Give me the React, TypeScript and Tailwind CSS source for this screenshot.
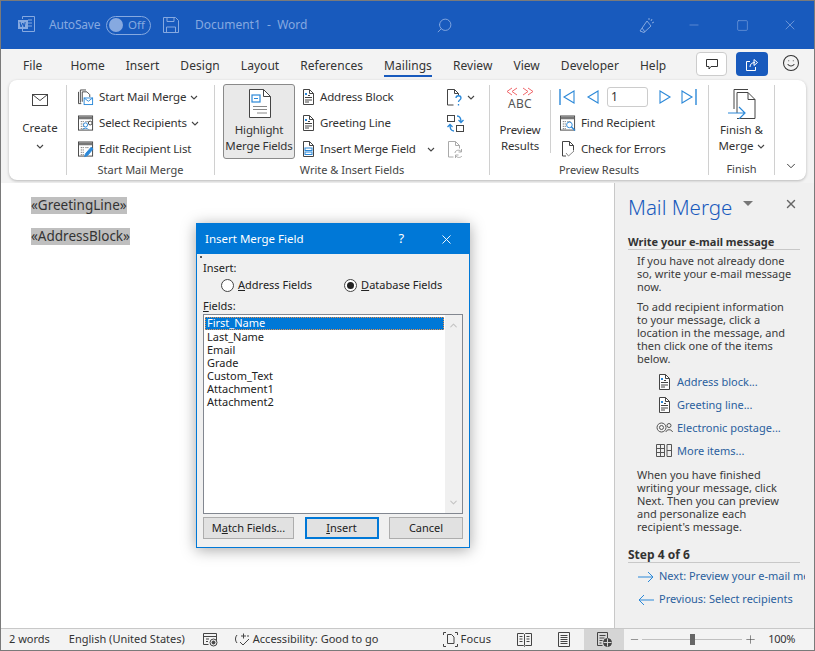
import React from "react";
import { ChevronDown, Search, Minus, Plus, Square, X, Smile } from "lucide-react";

const font = "font-['Noto_Sans','Open_Sans',sans-serif]";

const Chev = ({ className = "" }: { className?: string }) => (
  <svg width="8" height="5" viewBox="0 0 8 5" className={className} fill="none" stroke="#444" strokeWidth="1.1">
    <path d="M1 1l3 3 3-3" />
  </svg>
);

const DocSmall = ({ lines = "#444", blue = true }: { lines?: string; blue?: boolean }) => (
  <svg width="13" height="16" viewBox="0 0 13 16" fill="none" stroke="#444">
    <path d="M1.5.5h6l4 4v11h-10z" fill="#fff" />
    <path d="M7.5.5v4h4" />
    {blue && <rect x="3" y="4" width="2" height="2" fill="#2b88d8" stroke="none" />}
    <path d="M3 8.5h7M6 6.5h2M3 11h7M3 13h4" stroke={lines} />
  </svg>
);

const StartIcon = () => (
  <svg width="17" height="17" viewBox="0 0 17 17" fill="none" stroke="#444">
    <path d="M2.5 14V.5h6M.5 2.5V15h3" />
    <path d="M4.5 13V2.5h5l3 3V8" fill="#fff" />
    <rect x="6.5" y="9" width="9" height="7" fill="#fff" stroke="#2b88d8" />
    <path d="M6.5 9l4.5 3.5L15.5 9" stroke="#2b88d8" />
  </svg>
);

const TableIcon = ({ children }: { children: React.ReactNode }) => (
  <svg width="17" height="17" viewBox="0 0 17 17" fill="none" stroke="#444">
    <rect x=".5" y=".5" width="15" height="15" fill="#fff" />
    <rect x="1" y="1" width="14" height="3" fill="#777" stroke="none" />
    <path d="M3 6.5h3M3 9h3M3 11.5h3M3 14h3M8 6.5h3" strokeDasharray="1 1" />
    {children}
  </svg>
);

const ToolItem = ({ icon, label, chev, iconBox = "w-[16px]" }: { icon: React.ReactNode; label: string; chev?: boolean; iconBox?: string }) => (
  <div className="flex h-[26px] items-center text-[11.5px] tracking-[-.15px] text-[#333]">
    <span className={`flex shrink-0 justify-center ${iconBox}`}>{icon}</span>
    <span className="ml-[5px] whitespace-nowrap">{label}</span>
    {chev && <Chev className="ml-[4px]" />}
  </div>
);

const GroupLabel = ({ children }: { children: React.ReactNode }) => (
  <div className="flex h-[16px] items-center justify-center whitespace-nowrap text-[11px] text-[#444]">{children}</div>
);

const Sep = () => <div className="my-[5px] w-px shrink-0 bg-[#d0d0d0]" />;

const Tri = ({ dir, bar }: { dir: "l" | "r"; bar?: boolean }) => (
  <svg width="16" height="18" viewBox="0 0 16 18" fill="none" stroke="#2b88d8" strokeWidth="1.1">
    {dir === "l" ? (
      <>
        {bar && <path d="M1 1v16" strokeWidth="1.4" />}
        <path d="M15 3v12L5 9z" />
      </>
    ) : (
      <>
        {bar && <path d="M15 1v16" strokeWidth="1.4" />}
        <path d="M1 3v12l10-6z" />
      </>
    )}
  </svg>
);

const tabs = ["File", "Home", "Insert", "Design", "Layout", "References", "Mailings", "Review", "View", "Developer", "Help"];

const TitleBar = () => (
  <div className="flex h-[48px] shrink-0 items-center bg-[#185abd] pl-[16px] text-[12px] text-[#86a9e0]">
    <svg width="18" height="17" viewBox="0 0 18 17" fill="none" stroke="#86a9e0" className="mt-[-1px]">
      <path d="M5.5 3V.5h12v15h-12V13" />
      <path d="M11 4h4M11 7h4M11 10h4" />
      <rect x="1" y="4" width="10" height="9" fill="#86a9e0" stroke="none" />
      <path d="M3 6l1 5 1.8-4 1.4 4 1-5" stroke="#185abd" />
    </svg>
    <span className="ml-[14px] w-[50px] tracking-[-.2px]">AutoSave</span>
    <span className="ml-[7px] flex h-[19px] w-[45px] items-center rounded-full border border-[#86a9e0] pl-[2px]">
      <span className="h-[14px] w-[14px] rounded-full bg-[#86a9e0]" />
      <span className="ml-[5px] text-[11.5px]">Off</span>
    </span>
    <svg width="16" height="16" viewBox="0 0 16 16" fill="none" stroke="#86a9e0" className="ml-[12px]">
      <path d="M.5.500h12l3 3v12H.5z" />
      <path d="M4 .5v4h7v-4M3.500 15.500V10h9v5.500" />
    </svg>
    <span className="ml-[16px] w-[107px] whitespace-nowrap">Document1&nbsp; -&nbsp; Word</span>
    <Search size={17} className="ml-[134px] scale-x-[-1]" strokeWidth={1.3} />
    <svg width="17" height="17" viewBox="0 0 17 17" fill="none" stroke="#86a9e0" className="ml-[186px]">
      <path d="M1 14L8 4l4 5-7 6.500zM3 11l3 4M13 2l-1 2M15 5l-2 1M10 1l0 2" />
    </svg>
    <Minus size={14} className="ml-[31px]" strokeWidth={1} />
    <Square size={13} className="ml-[35px]" strokeWidth={1.1} />
    <X size={16} className="ml-[33px]" strokeWidth={1.1} />
  </div>
);

const TabBar = () => (
  <div className="flex h-[31px] shrink-0 bg-[#f3f3f3] pl-[22px] text-[12px] tracking-[.05px] text-[#333]">
    <div className="flex gap-[21px]">
      {tabs.map((t, i) => (
        <div key={t} className={`flex h-[31px] flex-col items-center pt-[8px] ${i === 0 ? "mr-[7px]" : ""}`}>
          <span>{t}</span>
          {t === "Mailings" && <span className="h-[2px] w-full bg-[#185abd]" />}
        </div>
      ))}
    </div>
    <div className="ml-auto mr-[14px] flex items-start pt-[3px]">
      <span className="flex h-[24px] w-[31px] items-center justify-center rounded-[4px] border border-[#ccc] bg-white">
        <svg width="12" height="12" viewBox="0 0 12 12" fill="none" stroke="#333">
          <path d="M.5 1.500h11v7H5L3 11V8.500H.5z" />
        </svg>
      </span>
      <span className="ml-[9px] flex h-[24px] w-[32px] items-center justify-center rounded-[4px] bg-[#185abd]">
        <svg width="13" height="13" viewBox="0 0 13 13" fill="none" stroke="#fff">
          <path d="M4 3.500H.5v9h9V9M4 9c0-3 2-4.500 5-4.500M8 1.500l3.500 3-3.500 3z" />
        </svg>
      </span>
      <Smile size={18} className="ml-[14px] mt-[2px] text-[#333]" strokeWidth={1.4} />
    </div>
  </div>
);

const Ribbon = () => (
  <div className="mx-[8px] flex h-[100px] shrink-0 rounded-[8px] bg-white shadow-[0_1px_3px_rgba(0,0,0,0.25)]">
    {/* Create */}
    <div className="flex w-[57px] shrink-0 flex-col items-center pl-[5px] pt-[14px] text-[11.5px] text-[#333]">
      <svg width="16" height="12" viewBox="0 0 16 12" fill="none" stroke="#444">
        <rect x=".5" y=".5" width="15" height="11" />
        <path d="M.5.500L8 6.500l7.500-6" />
      </svg>
      <span className="mt-[13px]">Create</span>
      <Chev className="mt-[8px]" />
    </div>
    <Sep />
    {/* Start Mail Merge */}
    <div className="flex w-[147px] shrink-0 flex-col pt-[4px]">
      <div className="pl-[11px]">
        <ToolItem icon={<StartIcon />} label="Start Mail Merge" chev />
        <ToolItem
          icon={
            <TableIcon>
              <circle cx="8" cy="10" r="2.200" stroke="#2b88d8" fill="#fff" />
              <path d="M5 15c.5-2 5.500-2 6 0" stroke="#2b88d8" />
              <circle cx="13" cy="8" r="2" fill="#fff" />
            </TableIcon>
          }
          label="Select Recipients"
          chev
        />
        <ToolItem
          icon={
            <TableIcon>
              <path d="M7 16l1-3 6-7 2 2-6 7z" fill="#2b88d8" stroke="#2b88d8" />
            </TableIcon>
          }
          label="Edit Recipient List"
        />
      </div>
      <GroupLabel>Start Mail Merge</GroupLabel>
    </div>
    <Sep />
    {/* Write & Insert Fields */}
    <div className="flex w-[274px] shrink-0 flex-col pt-[4px]">
      <div className="flex h-[78px]">
        <div className="ml-[8px] flex h-[75px] w-[72px] shrink-0 flex-col items-center rounded-[3px] border border-[#8a8a8a] bg-[#e9e9e9] pt-[4px] text-[11.5px] leading-[16px] tracking-[-.15px] text-[#333]">
          <svg width="23" height="29" viewBox="0 0 23 29" fill="none" stroke="#444">
            <path d="M1.500.500h14l7 7v21h-21z" fill="#fff" />
            <path d="M15.500.500v7h7" />
            <rect x="4" y="6" width="8" height="7" stroke="#2b88d8" fill="#fff" strokeWidth="1.200" />
            <path d="M6 9.500h4" stroke="#2b88d8" />
            <path d="M5 17.500h14M5 20.500h14M9 24h10" stroke="#888" />
          </svg>
          <span className="mt-[4px]">Highlight</span>
          <span className="whitespace-nowrap">Merge Fields</span>
        </div>
        <div className="ml-[7px] flex w-[133px] shrink-0 flex-col">
          <ToolItem icon={<DocSmall />} label="Address Block" iconBox="w-[13px]" />
          <ToolItem icon={<DocSmall />} label="Greeting Line" iconBox="w-[13px]" />
          <div className="flex items-center">
            <ToolItem
              iconBox="w-[13px]"
              icon={
                <svg width="13" height="16" viewBox="0 0 13 16" fill="none" stroke="#444">
                  <path d="M1.500.500h6l4 4v11h-10z" fill="#fff" />
                  <path d="M7.500.500v4h4" />
                  <rect x="3" y="7" width="7" height="2.500" stroke="#2b88d8" />
                  <rect x="3" y="11" width="7" height="2.500" stroke="#2b88d8" />
                </svg>
              }
              label="Insert Merge Field"
            />
            <Chev className="ml-auto" />
          </div>
        </div>
        <div className="ml-[12px] flex shrink-0 flex-col">
          <div className="flex h-[26px] items-center">
            <svg width="16" height="17" viewBox="0 0 16 17" fill="none" stroke="#444">
              <path d="M.5 16V.5h7l4 4v2M7.500.500v4h4M.5 16h6" />
              <path d="M9 9c0-3 5-3 5 0 0 2-2.500 2-2.500 4M11.500 15v1.500" stroke="#2b88d8" strokeWidth="1.300" />
            </svg>
            <Chev className="ml-[4px]" />
          </div>
          <div className="flex h-[26px] items-center">
            <svg width="17" height="17" viewBox="0 0 17 17" fill="none" stroke="#2b88d8">
              <rect x=".5" y=".5" width="7" height="6" stroke="#444" />
              <rect x="9.500" y="10.500" width="7" height="6" stroke="#444" />
              <path d="M10 1c3 0 4 2 4 6M11.500 5l2.500 2.500L16.500 5M7 16c-3 0-4-2-4-6M.5 12L3 9.500 5.500 12" strokeWidth="1.300" />
            </svg>
          </div>
          <div className="flex h-[26px] items-center">
            <svg width="16" height="17" viewBox="0 0 16 17" fill="none" stroke="#aaa">
              <path d="M1.500 16V.5h7l4 4v3M8.500.500v4h4M1.500 16h5" />
              <path d="M8 12c0-3 5-4 6.500-1M15 15c-1.500 2-5 2-6.500-.5M14.500 8v3h-3M8.500 17v-3h3" />
            </svg>
          </div>
        </div>
      </div>
      <GroupLabel>Write &amp; Insert Fields</GroupLabel>
    </div>
    <Sep />
    {/* Preview Results */}
    <div className="flex w-[218px] shrink-0 flex-col pt-[4px]">
      <div className="flex h-[78px]">
        <div className="flex w-[60px] shrink-0 flex-col items-center pt-[3px] text-[11.5px] leading-[16px] tracking-[-.1px] text-[#333]">
          <svg width="28" height="9" viewBox="0 0 28 9" fill="none" stroke="#f0666a" className="mb-[1px]">
            <path d="M6 1L1 4.500 6 8M11 1L6 4.500 11 8M17 1l5 3.500L17 8M22 1l5 3.500L22 8" />
          </svg>
          <span className="h-[14px] text-[12px] leading-[14px] tracking-[.3px] text-[#555]">ABC</span>
          <span className="mt-[11px]">Preview</span>
          <span>Results</span>
        </div>
        <div className="mb-[9px] mt-[6px] w-px shrink-0 bg-[#d0d0d0]" />
        <div className="flex flex-col pl-[8px]">
          <div className="flex h-[26px] items-center">
            <Tri dir="l" bar />
            <span className="ml-[8px]">
              <Tri dir="l" />
            </span>
            <span className="ml-[8px] flex h-[20px] w-[41px] items-center rounded-[3px] border border-[#ccc] bg-white pl-[3px] text-[12px] text-[#333]">1</span>
            <span className="ml-[11px]">
              <Tri dir="r" />
            </span>
            <span className="ml-[6px]">
              <Tri dir="r" bar />
            </span>
          </div>
          <div className="pl-[1px]">
            <ToolItem
              iconBox="w-[16px]"
              icon={
                <TableIcon>
                  <circle cx="10" cy="10" r="3" stroke="#2b88d8" fill="#fff" />
                  <path d="M12 12l4 4" stroke="#2b88d8" strokeWidth="1.400" />
                </TableIcon>
              }
              label="Find Recipient"
            />
            <ToolItem
              iconBox="w-[16px]"
              icon={
                <svg width="14" height="16" viewBox="0 0 14 16" fill="none" stroke="#444">
                  <path d="M1.500 15V.5h7l4 4v5M8.500.500v4h4M1.500 15H5" />
                  <path d="M5 12l2.500 3L13 10" stroke="#888" />
                </svg>
              }
              label="Check for Errors"
            />
          </div>
        </div>
      </div>
      <GroupLabel>Preview Results</GroupLabel>
    </div>
    <Sep />
    {/* Finish */}
    <div className="flex w-[65px] shrink-0 flex-col items-center pt-[9px] text-[11.5px] leading-[16px] text-[#333]">
      <svg width="28" height="30" viewBox="0 0 28 30" fill="none" stroke="#444">
        <path d="M6 20V.5h14M9 24V3.500h11l7 7v19H9" fill="#fff" />
        <path d="M20 3.500v7h7" />
        <path d="M0 24h16M11 18l6 6-6 6" stroke="#2b88d8" strokeWidth="1.200" />
      </svg>
      <span className="mt-[3px] whitespace-nowrap">Finish &amp;</span>
      <span className="flex items-center whitespace-nowrap">
        Merge
        <Chev className="ml-[3px]" />
      </span>
      <div className="mt-[7px] w-full">
        <GroupLabel>Finish</GroupLabel>
      </div>
    </div>
    <Sep />
    <div className="flex flex-1 items-end justify-center pb-[7px]">
      <ChevronDown size={14} className="text-[#333]" strokeWidth={1.6} />
    </div>
  </div>
);

const fields = ["Last_Name", "Email", "Grade", "Custom_Text", "Attachment1", "Attachment2"];

const Radio = ({ checked, children }: { checked?: boolean; children: React.ReactNode }) => (
  <label className="flex items-center text-[11px] text-[#222]">
    <span className="mr-[4px] flex h-[13px] w-[13px] items-center justify-center rounded-full border border-[#444] bg-white">
      {checked && <span className="h-[7px] w-[7px] rounded-full bg-[#222]" />}
    </span>
    <span>{children}</span>
  </label>
);

const DlgBtn = ({ children, width, primary }: { children: React.ReactNode; width: string; primary?: boolean }) => (
  <div className={`flex h-[22px] items-center justify-center bg-[#e1e1e1] text-[11px] text-[#222] ${width} ${primary ? "border-2 border-[#0078d7]" : "border border-[#adadad]"}`}>
    {children}
  </div>
);

const Dialog = () => (
  <div className="absolute left-[195px] top-[222px] flex h-[325px] w-[274px] flex-col border border-[#0078d7] bg-[#f0f0f0] shadow-[0_2px_14px_rgba(0,0,0,0.35)]">
    <div className="flex h-[30px] shrink-0 items-center bg-[#0078d7] pl-[8px] text-[11.5px] text-white">
      <span>Insert Merge Field</span>
      <span className="ml-[95px] text-[13px]">?</span>
      <X size={15} className="ml-[35px]" strokeWidth={1.5} />
    </div>
    <span className="absolute left-[3px] top-[32px] h-[2px] w-[2px] bg-[#555]" />
    <div className="flex flex-1 flex-col px-[6px] pt-[7px]">
      <div className="text-[11px] leading-[13px] text-[#222]">Insert:</div>
      <div className="mt-[3px] flex h-[16px] items-center pl-[18px]">
        <Radio>
          <u>A</u>ddress Fields
        </Radio>
        <span className="ml-[32px]">
          <Radio checked>
            <u>D</u>atabase Fields
          </Radio>
        </span>
      </div>
      <div className="mt-[6px] text-[11px] leading-[13px] text-[#222]">
        <u>F</u>ields:
      </div>
      <div className="mt-[2px] flex h-[200px] w-[260px] border border-[#828790] bg-white">
        <div className="flex-1 px-px pt-[2px] text-[11px] leading-[13px] text-[#222]">
          <div className="h-[13px] bg-[#0078d7] pl-[2px] leading-[12px] text-white outline-1 -outline-offset-1 outline-dotted outline-[#e8904a]">First_Name</div>
          {fields.map((f) => (
            <div key={f} className="pl-[2px]">
              {f}
            </div>
          ))}
        </div>
        <div className="flex w-[17px] shrink-0 flex-col items-center justify-between bg-[#f0f0f0] py-[5px]">
          <ChevronDown size={11} className="rotate-180 text-[#c4c4c4]" strokeWidth={2.4} />
          <ChevronDown size={11} className="text-[#c4c4c4]" strokeWidth={2.4} />
        </div>
      </div>
      <div className="mt-[3px] flex justify-between">
        <DlgBtn width="w-[91px]">
          <span>
            M<u>a</u>tch Fields...
          </span>
        </DlgBtn>
        <DlgBtn width="w-[74px]" primary>
          <span>
            <u>I</u>nsert
          </span>
        </DlgBtn>
        <DlgBtn width="w-[74px]">Cancel</DlgBtn>
      </div>
    </div>
  </div>
);

const PaneLink = ({ icon, label, className = "" }: { icon: React.ReactNode; label: string; className?: string }) => (
  <div className={`flex h-[23px] items-center ${className}`}>
    <span className="flex w-[18px] shrink-0 justify-center">{icon}</span>
    <span className="ml-[4px] whitespace-nowrap text-[11px] text-[#2b5f9e]">{label}</span>
  </div>
);

const ArrowIcon = ({ flip }: { flip?: boolean }) => (
  <svg width="16" height="12" viewBox="0 0 16 12" fill="none" stroke="#2b88d8" className={flip ? "scale-x-[-1]" : ""}>
    <path d="M0 6h15M10 1l5 5-5 5" />
  </svg>
);

const Pane = () => (
  <div className="w-[200px] shrink-0 overflow-hidden border-l border-[#c8c8c8] bg-[#f0f0f0] pl-[13px] text-[#3a3a3a]">
    <div className="flex h-[38px] items-center pt-[10px]">
      <span className="text-[20.5px] font-light leading-[28px] text-[#185abd]">Mail Merge</span>
      <span className="ml-[11px] mt-[-7px] h-0 w-0 border-x-[5px] border-t-[5px] border-x-transparent border-t-[#777]" />
      <X size={14} className="ml-[31px] mt-[-7px] text-[#666]" strokeWidth={2.4} />
    </div>
    <div className="mt-[13px] w-[172px] border-b border-[#c8c8c8] text-[11px] font-bold leading-[15px] whitespace-nowrap text-[#333]">Write your e-mail message</div>
    <div className="w-[172px] pl-[9px] pr-[8px] text-[11px] leading-[13px]">
      <p className="mt-[4px]">If you have not already done so, write your e-mail message now.</p>
      <p className="mt-[7px]">To add recipient information to your message, click a location in the message, and then click one of the items below.</p>
      <div className="mt-[5px] pl-[18px]">
        <PaneLink icon={<DocSmall />} label="Address block..." />
        <PaneLink icon={<DocSmall />} label="Greeting line..." />
        <PaneLink
          icon={
            <svg width="17" height="11" viewBox="0 0 17 11" fill="none" stroke="#555">
              <circle cx="5.500" cy="5.500" r="4.500" />
              <circle cx="5.500" cy="5.500" r="2" />
              <circle cx="13" cy="3.500" r="2" />
              <path d="M10 10c0-3 6-3 6.500 0" />
            </svg>
          }
          label="Electronic postage..."
        />
        <PaneLink
          icon={
            <svg width="16" height="13" viewBox="0 0 16 13" fill="none" stroke="#555">
              <path d="M.5.500h8v12h-8zM.5 4.500h8M.5 8.500h8M4.500.500v12M11 .5h4.500v12H11z" />
              <path d="M11 6.500h4" />
            </svg>
          }
          label="More items..."
        />
      </div>
      <p className="mt-[6px]">When you have finished writing your message, click Next. Then you can preview and personalize each recipient's message.</p>
    </div>
    <div className="mt-[14px] w-[172px] border-b border-[#c8c8c8] text-[12px] font-bold leading-[15px] text-[#333]">Step 4 of 6</div>
    <div className="mt-[2px] w-[177px] overflow-hidden pl-[9px]">
      <PaneLink icon={<ArrowIcon />} label="Next: Preview your e-mail message" />
      <PaneLink icon={<ArrowIcon flip />} label="Previous: Select recipients" />
    </div>
  </div>
);

const StatusBar = () => (
  <div className="flex h-[22px] shrink-0 items-center border-t border-[#c8c8c8] bg-[#f3f3f3] pl-[8px] text-[11px] text-[#333]">
    <span>2 words</span>
    <span className="ml-[19px]">English (United States)</span>
    <svg width="15" height="14" viewBox="0 0 15 14" fill="none" stroke="#444" className="ml-[18px]">
      <path d="M.5.500h13v11h-6" />
      <path d="M.5 3.500h13M.5.500v11h5M3 6h3M3 8.500h2" />
      <circle cx="10.500" cy="9.500" r="3.500" fill="#f3f3f3" />
      <circle cx="10.500" cy="9.500" r="1.500" fill="#444" />
    </svg>
    <svg width="17" height="15" viewBox="0 0 17 15" fill="none" stroke="#444" className="ml-[16px]">
      <path d="M3 3a6 6 0 0 0 0 8M14 3v2M6 10l3 3 6-6M7 4h5M9.500 1.500v5" />
    </svg>
    <span className="ml-[2px]">Accessibility: Good to go</span>
    <svg width="15" height="15" viewBox="0 0 15 15" fill="none" stroke="#444" className="ml-[65px]">
      <path d="M.5 3V.5H3M12 .5h2.500V3M.5 12v2.500H3M12 14.500h2.500V12M4.500 11.500v-9h4l2.500 2.500v6.500z" />
    </svg>
    <span className="ml-[2px] tracking-[.2px]">Focus</span>
    <svg width="15" height="14" viewBox="0 0 15 14" fill="none" stroke="#444" className="ml-[26px]">
      <path d="M.5.500h6l1 1 1-1h6v12h-6l-1 1-1-1h-6zM7.500 1.500v11M2.500 3.500h3M2.500 6h3M2.500 8.500h3M9.500 3.500h3M9.500 6h3M9.500 8.500h3" />
    </svg>
    <svg width="12" height="15" viewBox="0 0 12 15" fill="none" stroke="#444" className="ml-[26px]">
      <path d="M.5.500h11v14H.5zM2.500 3.500h7M2.500 5.500h7M2.500 7.500h7M2.500 9.500h7M2.500 11.500h7" />
    </svg>
    <span className="ml-[14px] flex h-full w-[40px] items-center justify-center bg-[#d5d5d5]">
      <svg width="15" height="15" viewBox="0 0 15 15" fill="none" stroke="#444">
        <path d="M.5.500h10v9M.5.500v13h5M2.500 3.500h6M2.500 6h5M2.500 8.500h3M2.500 11h2" />
        <circle cx="10.500" cy="10.500" r="4" fill="#444" />
        <path d="M6.500 10.500h8M10.500 6.500v8" stroke="#d5d5d5" />
      </svg>
    </span>
    <Minus size={11} className="ml-[5px] text-[#444]" strokeWidth={1.2} />
    <span className="relative ml-[2px] flex h-[12px] w-[100px] items-center">
      <span className="h-px w-full bg-[#c0c0c0]" />
      <span className="absolute left-[48px] h-[11px] w-[5px] bg-[#666]" />
    </span>
    <Plus size={13} className="ml-[2px] text-[#444]" strokeWidth={1.1} />
    <span className="ml-[11px] tracking-[-.3px]">100%</span>
  </div>
);

export default function App() {
  return (
    <div className={`relative flex h-[651px] w-[815px] flex-col overflow-hidden border border-[#7a7a7a] bg-[#f3f3f3] ${font}`}>
      <TitleBar />
      <TabBar />
      <Ribbon />
      <div className="mt-[3px] flex min-h-0 flex-1">
        <div className="flex-1 bg-white pl-[30px] pt-[14px] text-[13.5px] text-[#333]">
          <div className="w-fit bg-[#bfbfbf] leading-[17px]">«GreetingLine»</div>
          <div className="mt-[14px] w-fit bg-[#bfbfbf] leading-[17px]">«AddressBlock»</div>
        </div>
        <Pane />
      </div>
      <StatusBar />
      <Dialog />
    </div>
  );
}
